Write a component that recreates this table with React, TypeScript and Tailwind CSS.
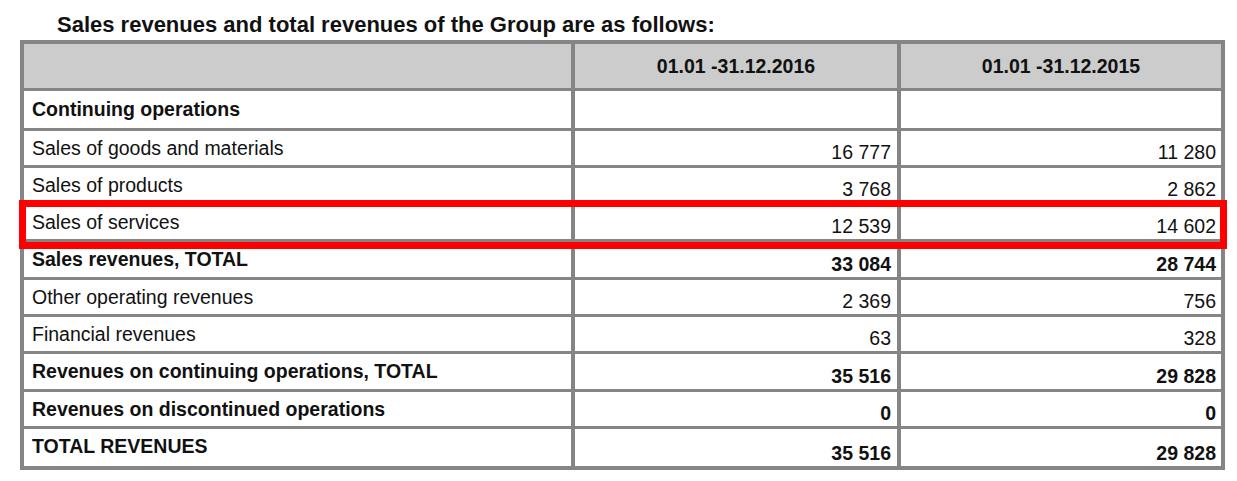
const rows = [
  { label: 'Continuing operations', a: '', b: '', bold: true },
  { label: 'Sales of goods and materials', a: '16 777', b: '11 280' },
  { label: 'Sales of products', a: '3 768', b: '2 862' },
  { label: 'Sales of services', a: '12 539', b: '14 602' },
  { label: 'Sales revenues, TOTAL', a: '33 084', b: '28 744', bold: true },
  { label: 'Other operating revenues', a: '2 369', b: '756' },
  { label: 'Financial revenues', a: '63', b: '328' },
  { label: 'Revenues on continuing operations, TOTAL', a: '35 516', b: '29 828', bold: true },
  { label: 'Revenues on discontinued operations', a: '0', b: '0', bold: true },
  { label: 'TOTAL REVENUES', a: '35 516', b: '29 828', bold: true },
];

export default function App() {
  return (
    <div className="relative w-[1237px] h-[481px] bg-white text-[#111] font-['Liberation_Sans',Arial,sans-serif]">
      <h1 className="pl-[57px] pt-[13px] h-[40px] text-[22px] leading-[24px] font-bold">
        Sales revenues and total revenues of the Group are as follows:
      </h1>

      <div className="ml-[20px] w-[1205px] grid grid-cols-[547px_322px_320px] grid-rows-[44px_37px_34px_34px_34px_35px_34px_34px_35px_34px_37px] gap-x-[4px] gap-y-[3px] p-[4px] bg-[#858585] text-[19.5px] leading-[22px]">
        <div className="bg-[#cccccc]" />
        <div className="bg-[#cccccc] flex items-center justify-center font-bold">01.01 -31.12.2016</div>
        <div className="bg-[#cccccc] flex items-center justify-center font-bold">01.01 -31.12.2015</div>

        {rows.map((r, i) => (
          <div key={r.label} className="contents">
            <div className={`bg-white pl-[8px] ${i === 0 ? 'pt-[7px]' : 'pt-[6px]'} ${r.bold ? 'font-bold' : ''}`}>
              {r.label}
            </div>
            <div className={`bg-white flex items-end justify-end pr-[6px] pb-[2px] ${r.bold ? 'font-bold' : ''}`}>
              {r.a}
            </div>
            <div className={`bg-white flex items-end justify-end pr-[5px] pb-[2px] ${r.bold ? 'font-bold' : ''}`}>
              {r.b}
            </div>
          </div>
        ))}
      </div>

      {/* highlight box over "Sales of services" */}
      <div className="absolute left-[19px] top-[200px] w-[1208px] h-[49px] border-[7px] border-[#ff0000]" />
    </div>
  );
}
